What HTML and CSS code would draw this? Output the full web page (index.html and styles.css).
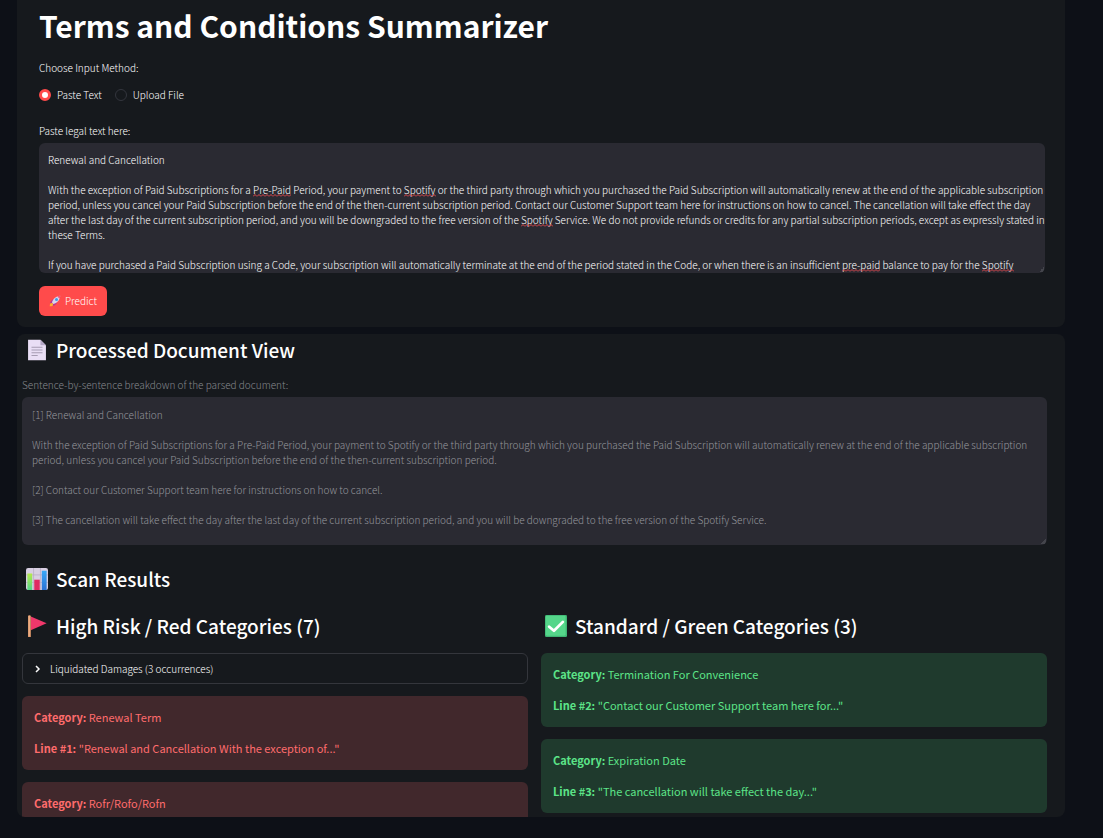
FILE: index.html
```html
<!DOCTYPE html>
<html lang="en">
<head>
    <meta charset="UTF-8">
    <meta name="viewport" content="width=device-width, initial-scale=1.0">
    <title>Terms and Conditions Summarizer</title>
    <link rel="stylesheet" href="styles.css">
</head>
<body>
    <main class="app">
        <!-- Input -->
        <form class="panel input-panel">
            <h1>Terms and Conditions Summarizer</h1>

            <fieldset class="method">
                <legend class="label">Choose Input Method:</legend>
                <div class="radios">
                    <label class="radio"><input type="radio" name="method" value="paste" checked> Paste Text</label>
                    <label class="radio"><input type="radio" name="method" value="upload"> Upload File</label>
                </div>
            </fieldset>

            <label class="label" for="legal-text">Paste legal text here:</label>
            <div class="editor">
                <textarea class="textarea" id="legal-text" spellcheck="false">Renewal and Cancellation

With the exception of Paid Subscriptions for a Pre-Paid Period, your payment to Spotify or the third party through which you purchased the Paid Subscription will automatically renew at the end of the applicable subscription period, unless you cancel your Paid Subscription before the end of the then-current subscription period. Contact our Customer Support team here for instructions on how to cancel. The cancellation will take effect the day after the last day of the current subscription period, and you will be downgraded to the free version of the Spotify Service. We do not provide refunds or credits for any partial subscription periods, except as expressly stated in these Terms.

If you have purchased a Paid Subscription using a Code, your subscription will automatically terminate at the end of the period stated in the Code, or when there is an insufficient pre-paid balance to pay for the Spotify</textarea>
                <div class="marks" id="marks"></div>
            </div>

            <button class="predict" type="button">
                <svg class="rocket" viewBox="0 0 32 32" aria-hidden="true">
                    <path d="M2 30c0-5 1-9 5-10l6 5c-1 4-5 5-11 5z" fill="#ffb02e"/>
                    <path d="M8 13c3-3 7-3 10-2l-8 10-7 1c0-4 2-6 5-9zM19 24c3-3 3-7 2-10l-10 8-1 7c4 0 6-2 9-5z" fill="#b8358f"/>
                    <path d="M8 20C10 11 18 3 30 2c-1 12-9 20-18 22z" fill="#d9d5ea"/>
                    <path d="M30 2c-3 0-6 1-8 2l6 6c1-2 2-5 2-8z" fill="#f0567c"/>
                    <circle cx="20" cy="12" r="4" fill="#3f9be8"/>
                </svg>
                Predict
            </button>
        </form>

        <!-- Results -->
        <section class="panel results-panel">
            <h2>
                <svg class="icon" viewBox="0 0 32 32" aria-hidden="true">
                    <path d="M3 1h18l8 8v22H3z" fill="#e9def5"/>
                    <path d="M21 1l8 8h-8z" fill="#b4a7c6"/>
                    <path d="M8 12h16M8 16h16M8 20h16M8 24h9" stroke="#a69cb3" stroke-width="1.6"/>
                </svg>
                Processed Document View
            </h2>
            <label class="label muted" for="parsed-text">Sentence-by-sentence breakdown of the parsed document:</label>
            <textarea class="textarea parsed" id="parsed-text" disabled>[1] Renewal and Cancellation

With the exception of Paid Subscriptions for a Pre-Paid Period, your payment to Spotify or the third party through which you purchased the Paid Subscription will automatically renew at the end of the applicable subscription period, unless you cancel your Paid Subscription before the end of the then-current subscription period.

[2] Contact our Customer Support team here for instructions on how to cancel.

[3] The cancellation will take effect the day after the last day of the current subscription period, and you will be downgraded to the free version of the Spotify Service.</textarea>

            <h2 class="scan">
                <svg class="icon" viewBox="0 0 32 32" aria-hidden="true">
                    <defs>
                        <linearGradient id="bar-green" x2="0" y2="1"><stop stop-color="#b5e94a"/><stop offset="1" stop-color="#55d68a"/></linearGradient>
                        <linearGradient id="bar-blue" x2="0" y2="1"><stop stop-color="#3aa8f5"/><stop offset="1" stop-color="#2b72d6"/></linearGradient>
                    </defs>
                    <rect width="32" height="32" rx="3" fill="#d8cfe2"/>
                    <path d="M0 10h32M0 21h32M11 0v32M21 0v32" stroke="#b5a9c2"/>
                    <path d="M2 8h7v24H2z" fill="url(#bar-green)"/>
                    <path d="M12 17h8v15h-8z" fill="#e02a62"/>
                    <path d="M23 4h7v28h-7z" fill="url(#bar-blue)"/>
                </svg>
                Scan Results
            </h2>

            <div class="columns">
                <section class="column">
                    <h2>
                        <svg class="icon" viewBox="0 0 32 32" aria-hidden="true">
                            <path d="M7 2l23 10L7 22z" fill="#f0386b"/>
                            <path d="M3 1q2-1 4 0v31H3z" fill="#e39a6c"/>
                            <path d="M4 1h1v30H4z" fill="#f5c29b"/>
                        </svg>
                        High Risk / Red Categories (7)
                    </h2>
                    <details class="expander">
                        <summary>
                            <svg class="chevron" viewBox="0 0 12 12" aria-hidden="true"><path d="M5 3l3 3-3 3"/></svg>
                            Liquidated Damages (3 occurrences)
                        </summary>
                    </details>
                    <article class="card red">
                        <p><strong>Category:</strong> Renewal Term</p>
                        <p><strong>Line #1:</strong> "Renewal and Cancellation With the exception of..."</p>
                    </article>
                    <article class="card red">
                        <p><strong>Category:</strong> Rofr/Rofo/Rofn</p>
                    </article>
                </section>

                <section class="column">
                    <h2>
                        <svg class="icon" viewBox="0 0 32 32" aria-hidden="true">
                            <rect width="32" height="32" rx="2" fill="#3fb574"/>
                            <rect x="1" y="1" width="29" height="29" rx="2" fill="#55d68a"/>
                            <path d="M6 17l7 6L26 10" fill="none" stroke="#fff" stroke-width="4" stroke-linecap="round" stroke-linejoin="round"/>
                        </svg>
                        Standard / Green Categories (3)
                    </h2>
                    <article class="card green">
                        <p><strong>Category:</strong> Termination For Convenience</p>
                        <p><strong>Line #2:</strong> "Contact our Customer Support team here for..."</p>
                    </article>
                    <article class="card green">
                        <p><strong>Category:</strong> Expiration Date</p>
                        <p><strong>Line #3:</strong> "The cancellation will take effect the day..."</p>
                    </article>
                </section>
            </div>
        </section>
    </main>

    <script src="script.js"></script>
</body>
</html>
```
FILE: styles.css
```css
* {
    box-sizing: border-box;
}

body {
    margin: 0;
    background: #0d1017;
    color: #fff;
    font-family: "Source Sans Pro", "Noto Sans CJK SC", sans-serif;
    font-size: 10px;
    font-weight: 300;
    line-height: 16px;
}

h1, h2, p {
    margin: 0;
}

.app {
    display: flex;
    flex-direction: column;
    gap: 7px;
    height: 100vh;
    padding: 0 38px 21px 17px;
}

.panel {
    background: #16191d;
    border-radius: 8px;
}

/* Input panel */
.input-panel {
    padding: 4px 20px 11px 22px;
    border-radius: 0 0 8px 8px;
}

h1 {
    font-size: 30px;
    line-height: 42px;
    font-weight: 700;
}

.label {
    display: block;
    padding: 0;
    margin-bottom: 4px;
}

.method {
    border: 0;
    margin: 14px 0 20px;
    padding: 0;
}

.radios {
    display: flex;
    gap: 13px;
    padding-top: 7px;
}

.radio {
    display: flex;
    align-items: center;
    gap: 6px;
}

.radio input {
    appearance: none;
    width: 12px;
    height: 12px;
    margin: 0;
    border: 1px solid #33353d;
    border-radius: 50%;
}

.radio input:checked {
    border: 3px solid #ff4b4b;
    background: #fff;
}

.textarea {
    display: block;
    width: 100%;
    height: 130px;
    padding: 10px;
    border: 0;
    border-radius: 6px;
    background: linear-gradient(135deg, transparent 50%, #44454c 50%) no-repeat right 1px bottom 1px / 5px 5px #2a2a32;
    color: #fff;
    font: inherit;
    line-height: 15px;
    white-space: pre-wrap;
    overflow-wrap: break-word;
    overflow-y: auto;
    scrollbar-width: none;
    resize: none;
}

.editor {
    position: relative;
}

.editor .textarea {
    padding: 9px 0 9px 9px;
}

/* Spelling marks over the text */
.marks {
    position: absolute;
    inset: 0;
    overflow: hidden;
    pointer-events: none;
}

.mark {
    position: absolute;
    height: 3px;
    background: url("data:image/svg+xml,%3Csvg xmlns='http://www.w3.org/2000/svg' width='4' height='3'%3E%3Cpath d='M0 2.5L2 .5L4 2.5' fill='none' stroke='%23e5484d'/%3E%3C/svg%3E") repeat-x;
}

.predict {
    display: flex;
    align-items: center;
    gap: 4px;
    height: 30px;
    margin-top: 13px;
    padding: 0 10px;
    border: 0;
    border-radius: 6px;
    background: #ff4b4b;
    color: #fff;
    font: inherit;
}

.rocket {
    width: 12px;
    height: 12px;
}

/* Results panel */
.results-panel {
    flex: 1;
    min-height: 0;
    padding: 1px 18px 0 5px;
    overflow-y: auto;
    scrollbar-width: none;
}

h2 {
    display: flex;
    align-items: center;
    gap: 8px;
    padding-left: 4px;
    font-size: 19px;
    line-height: 30px;
    font-weight: 500;
}

.icon {
    flex: none;
    width: 22px;
    height: 22px;
}

.muted {
    margin-top: 12px;
    color: #85878c;
}

.parsed {
    height: 148px;
    color: #95969c;
}

.scan {
    margin: 19px 0 17px;
}

.columns {
    display: grid;
    grid-template-columns: 1fr 1fr;
    gap: 13px;
}

.column {
    display: flex;
    flex-direction: column;
    gap: 12px;
}

.expander {
    border: 1px solid #34363c;
    border-radius: 6px;
}

.expander summary {
    display: flex;
    align-items: center;
    gap: 7px;
    height: 29px;
    padding: 0 8px;
    list-style: none;
    cursor: pointer;
}

.chevron {
    width: 12px;
    height: 12px;
    fill: none;
    stroke: #fafafa;
    stroke-width: 1.5;
}

.card {
    display: flex;
    flex-direction: column;
    gap: 12px;
    min-height: 74px;
    padding: 12px;
    border-radius: 6px;
    font-size: 11px;
    font-weight: 400;
    line-height: 19px;
}

.card strong {
    font-weight: 600;
}

.red {
    background: #41282c;
    color: #ff6c6c;
}

.green {
    background: #1f3a2d;
    color: #5ce488;
}
```
FILE: script.js
```js
const misspelled = /(Pre-Paid|pre-paid|Spotify)/;
const input = document.getElementById('legal-text');
const marks = document.getElementById('marks');

// Lay the text out in a copy of the box, note where the words fall, then drop the copy
function markSpelling() {
    const copy = document.createElement('div');
    copy.className = 'textarea';
    input.value.split(misspelled).forEach(part => {
        const node = document.createElement(misspelled.test(part) ? 'u' : 'span');
        node.textContent = part;
        copy.appendChild(node);
    });
    marks.replaceChildren(copy);

    const box = marks.getBoundingClientRect();
    const rects = [...copy.querySelectorAll('u')].map(word => word.getBoundingClientRect());
    marks.replaceChildren();
    rects.forEach(rect => {
        const mark = document.createElement('span');
        mark.className = 'mark';
        mark.style.left = Math.round(rect.left - box.left) + 'px';
        mark.style.top = Math.round((rect.top + rect.bottom) / 2 - box.top + 4 - input.scrollTop) + 'px';
        mark.style.width = Math.round(rect.width) + 'px';
        marks.appendChild(mark);
    });
}

input.addEventListener('input', markSpelling);
input.addEventListener('scroll', markSpelling);
window.addEventListener('resize', markSpelling);
markSpelling();
```
